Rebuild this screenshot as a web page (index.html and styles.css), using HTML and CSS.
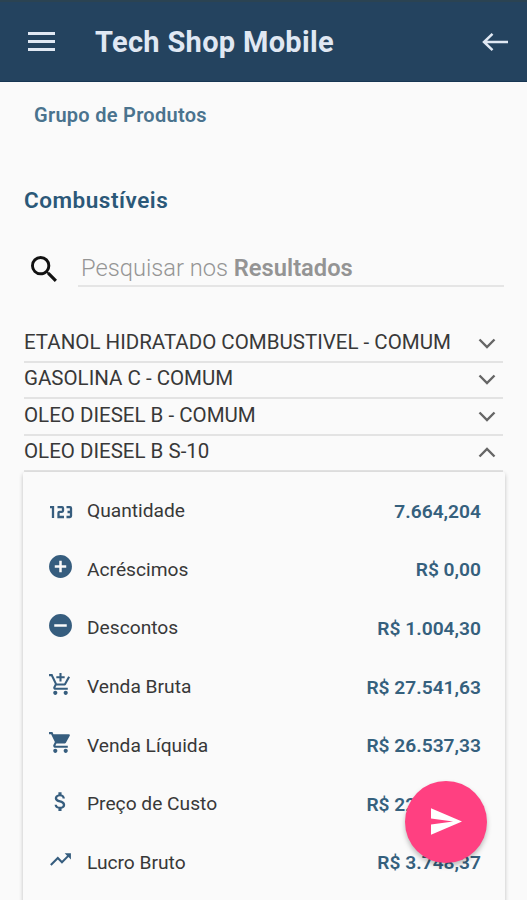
FILE: index.html
```html
<!DOCTYPE html>
<html lang="pt-BR">
<head>
<meta charset="utf-8">
<meta name="viewport" content="width=device-width, initial-scale=1">
<title>Tech Shop Mobile</title>
<link rel="stylesheet" href="styles.css">
</head>
<body>
<header class="bar">
  <svg class="menu" viewBox="0 0 27 19"><path d="M0 1.500h27M0 9.500h27M0 17.500h27"/></svg>
  <h1>Tech Shop Mobile</h1>
  <svg class="back" viewBox="0 0 27 20"><path d="M26 10H2M10.500 1.800L2 10l8.500 8.200"/></svg>
</header>
<main>
  <p class="crumb">Grupo de Produtos</p>
  <h2>Combustíveis</h2>
  <div class="search">
    <svg viewBox="3 3 17.500 17.500"><path d="M15.500 14h-.79l-.28-.27A6.471 6.471 0 0 0 16 9.500 6.500 6.500 0 1 0 9.500 16c1.610 0 3.090-.59 4.230-1.570l.27.28v.79l5 4.990L20.490 19l-4.990-5zm-6 0C7.010 14 5 11.990 5 9.500S7.010 5 9.500 5 14 7.010 14 9.500 11.990 14 9.500 14z"/></svg>
    <div class="field">Pesquisar nos <b>Resultados</b></div>
  </div>
  <ul class="groups">
    <li><span>ETANOL HIDRATADO COMBUSTIVEL - COMUM</span><svg viewBox="0 0 18 11"><path d="M1.500 1.500L9 9l7.500-7.500"/></svg></li>
    <li><span>GASOLINA C - COMUM</span><svg viewBox="0 0 18 11"><path d="M1.500 1.500L9 9l7.500-7.500"/></svg></li>
    <li><span>OLEO DIESEL B - COMUM</span><svg viewBox="0 0 18 11"><path d="M1.500 1.500L9 9l7.500-7.500"/></svg></li>
    <li><span>OLEO DIESEL B S-10</span><svg viewBox="0 0 18 11"><path d="M1.500 9.500L9 2l7.500 7.500"/></svg></li>
  </ul>
  <section class="card">
    <div class="row"><svg class="digits" viewBox="0 0 24 14"><path d="M1 2.200h3V13M8.500 2.200H13q1 0 1 1v2.600q0 1-1 1h-2.500q-1 0-1 1V12H15M17.500 2.200H21q1 0 1 1V11q0 1-1 1h-3.500M18.500 7H22"/></svg><span>Quantidade</span><b>7.664,204</b></div>
    <div class="row"><svg viewBox="0 0 24 24"><path d="M12 1a11 11 0 1 0 0 22 11 11 0 0 0 0-22zm5.500 12.200h-4.300v4.300h-2.400v-4.300H6.500v-2.400h4.300V6.500h2.400v4.300h4.300z"/></svg><span>Acréscimos</span><b>R$ 0,00</b></div>
    <div class="row"><svg viewBox="0 0 24 24"><path d="M12 1a11 11 0 1 0 0 22 11 11 0 0 0 0-22zm6 12.100H6v-2.200h12z"/></svg><span>Descontos</span><b>R$ 1.004,30</b></div>
    <div class="row"><svg viewBox="0 0 24 24"><path d="M11 9h2V6h3V4h-3V1h-2v3H8v2h3v3zm-4 9c-1.100 0-1.990.9-1.990 2S5.900 22 7 22s2-.9 2-2-.9-2-2-2zm10 0c-1.100 0-1.990.9-1.990 2s.89 2 1.990 2 2-.9 2-2-.9-2-2-2zm-9.830-3.250l.03-.12.900-1.630h7.450c.75 0 1.410-.41 1.750-1.030l3.860-7.010L19.420 4h-.01l-1.100 2-2.760 5H8.530l-.13-.27L6.160 6l-.95-2-.94-2H1v2h2l3.600 7.590-1.350 2.450c-.16.28-.25.61-.25.96 0 1.100.9 2 2 2h12v-2H7.420c-.13 0-.25-.11-.25-.25z"/></svg><span>Venda Bruta</span><b>R$ 27.541,63</b></div>
    <div class="row"><svg viewBox="0 0 24 24"><path d="M7 18c-1.100 0-1.990.9-1.990 2S5.900 22 7 22s2-.9 2-2-.9-2-2-2zM1 2v2h2l3.600 7.590-1.350 2.450c-.16.28-.25.61-.25.96 0 1.100.9 2 2 2h12v-2H7.420c-.14 0-.25-.11-.25-.25l.03-.12.900-1.630h7.450c.75 0 1.410-.41 1.750-1.030l3.580-6.490A1 1 0 0 0 20 4H5.210l-.94-2H1zm16 16c-1.100 0-1.990.9-1.990 2s.89 2 1.990 2 2-.9 2-2-.9-2-2-2z"/></svg><span>Venda Líquida</span><b>R$ 26.537,33</b></div>
    <div class="row"><svg viewBox="0 0 24 24"><path d="M11.800 10.900c-2.270-.59-3-1.200-3-2.150 0-1.090 1.010-1.850 2.700-1.850 1.780 0 2.440.85 2.500 2.100h2.210c-.07-1.720-1.120-3.300-3.210-3.810V3h-3v2.160c-1.940.42-3.500 1.680-3.500 3.610 0 2.310 1.910 3.460 4.700 4.130 2.500.6 3 1.480 3 2.410 0 .69-.49 1.790-2.700 1.790-2.060 0-2.870-.92-2.980-2.100h-2.200c.12 2.190 1.760 3.420 3.680 3.830V21h3v-2.150c1.950-.37 3.500-1.500 3.500-3.550 0-2.840-2.430-3.810-4.700-4.400z"/></svg><span>Preço de Custo</span><b>R$ 22.788,96</b></div>
    <div class="row"><svg viewBox="0 0 24 24"><path d="M16 6l2.290 2.290-4.880 4.880-4-4L2 16.590 3.410 18l6-6 4 4 6.300-6.290L22 12V6z"/></svg><span>Lucro Bruto</span><b>R$ 3.748,37</b></div>
  </section>
</main>
<button class="fab" aria-label="Enviar"><svg viewBox="2 3 21 18"><path d="M2.010 21L23 12 2.010 3 2 10l15 2-15 2z"/></svg></button>
</body>
</html>
```
FILE: styles.css
```css
* { box-sizing: border-box; }
body {
  margin: 0;
  height: 900px;
  overflow: hidden;
  background: #fafafa;
  color: #383838;
  font-family: Roboto, "Liberation Sans", sans-serif;
}
h1, h2, p, ul { margin: 0; padding: 0; }
svg { display: block; flex: none; }
.bar {
  height: 82px;
  padding: 0 18px 0 28px;
  display: flex;
  align-items: center;
  background: #24435f;
  border-top: 2px solid #2b4352;
  border-bottom: 1px solid #173653;
  color: #e0e8f3;
}
.bar path { fill: none; stroke: #e0e8f3; stroke-width: 3; }
.bar .back path { stroke-width: 2.500; }
.menu { width: 27px; height: 19px; }
.back { width: 27px; height: 20px; margin-left: auto; }
h1 { margin-left: 40px; font-size: 29px; line-height: 34px; font-weight: 700; letter-spacing: .31px; }
main { padding: 0 22px; }
.crumb { padding: 21px 0 0 12px; font-size: 20px; line-height: 24px; font-weight: 600; letter-spacing: .28px; color: #4a738e; }
h2 { padding: 59px 0 1px 2px; font-size: 22.500px; line-height: 28px; font-weight: 600; letter-spacing: .52px; color: #2b5878; }
.search { display: flex; height: 72px; padding: 0 1px 0 9px; align-items: flex-end; }
.search svg { width: 26px; height: 26px; margin-bottom: 5px; fill: #111; }
.field { flex: 1; margin-left: 21px; height: 39px; padding: 2px 0 0 3px; border-bottom: 2px solid #e5e5e5; font-size: 23.700px; line-height: 37px; color: #959595; font-weight: 300; }
.field b { font-weight: 600; color: #949494; }
.groups { list-style: none; margin: 39px 2px 0; }
.groups li { height: 36.500px; display: flex; align-items: center; justify-content: space-between; border-bottom: 2px solid #e3e3e3; font-size: 20.500px; padding: 0 7px 3px 0; }
.groups svg { width: 18px; height: 11px; margin-top: 3px; }
.groups path { fill: none; stroke: #666; stroke-width: 2.400; }
.card { height: 440px; margin-left: 1px; padding: 10px 24px 0 23px; box-shadow: 0 2px 4px rgba(0,0,0,.24); border-radius: 2px; }
.row { height: 58.600px; display: flex; align-items: center; font-size: 19.200px; }
.row svg { width: 25px; height: 25px; margin: -6px 0 0 2px; fill: #365d7e; }
.row .digits { width: 24px; height: 14px; margin: 1px 0 0 3px; fill: none; stroke: #365d7e; stroke-width: 2.300; }
.row span { margin: -1px 0 0 14px; }
.row .digits + span { margin-left: 14px; }
.row b { margin-left: auto; font-size: 19.200px; font-weight: 600; color: #35607d; }
.fab { position: absolute; left: 405px; top: 780.500px; width: 82px; height: 82px; padding: 0 0 0 1px; border: 0; border-radius: 50%; background: #ff4081; box-shadow: 0 3px 5px rgba(0,0,0,.26); display: flex; align-items: center; justify-content: center; }
.fab svg { width: 31px; height: 27px; fill: #fff; }
```
